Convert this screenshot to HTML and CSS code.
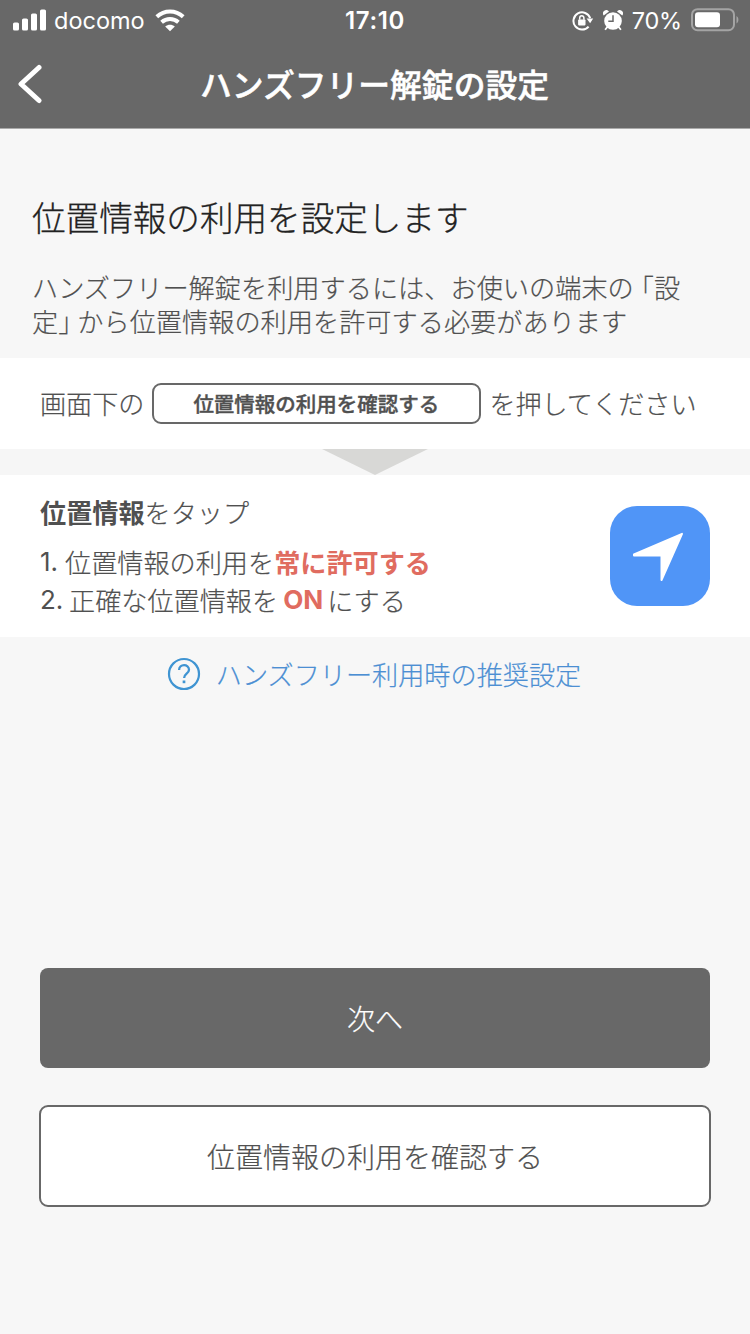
FILE: index.html
```html
<!DOCTYPE html>
<html lang="ja">
<head>
<meta charset="utf-8">
<title>ハンズフリー解錠の設定</title>
<link rel="stylesheet" href="styles.css">
</head>
<body>
<div class="screen">
  <header class="header">
    <div class="status">
      <div class="status-left">
        <svg class="signal" width="34" height="22" viewBox="0 0 34 22" fill="#fff"><rect x="0" y="13.5" width="6" height="8" rx="1.6"/><rect x="9" y="9.5" width="6" height="12" rx="1.6"/><rect x="18" y="4.5" width="6" height="17" rx="1.6"/><rect x="27" y="0.5" width="6" height="21" rx="1.6"/></svg>
        <span class="carrier">docomo</span>
        <svg class="wifi" width="30" height="23" viewBox="0 0 30 23"><g fill="none" stroke="#fff" stroke-width="4"><path d="M1.8 7.8C9.4 .7 20.6 .7 28.2 7.8"/><path d="M6.6 13.2C11.5 8.9 18.5 8.9 23.4 13.2"/></g><path d="M10.2 17.4c2.8-2.3 6.8-2.3 9.6 0L15 22.2z" fill="#fff"/></svg>
      </div>
      <span class="clock">17:10</span>
      <div class="status-right">
        <svg class="lock" width="22" height="20" viewBox="0 0 22 20"><path d="M18.2 7.2A8.6 8.6 0 1 0 16.6 15.6" fill="none" stroke="#fff" stroke-width="2"/><path d="M14.6 7.4h6.6l-3.1 4.8z" fill="#fff"/><rect x="6.1" y="8.4" width="7.4" height="6" rx=".8" fill="#fff"/><path d="M7.7 8.8V7a2.1 2.3 0 0 1 4.2 0v1.8" fill="none" stroke="#fff" stroke-width="1.5"/></svg>
        <svg class="alarm" width="20" height="21" viewBox="0 0 20 21"><g fill="#fff"><circle cx="10" cy="11" r="8.8"/><path d="M.7 5.5A3.2 3.2 0 0 1 6 1.5zM19.3 5.5A3.2 3.2 0 0 0 14 1.5z"/></g><path d="M4.3 17l-2.2 2.7M15.7 17l2.2 2.7" stroke="#fff" stroke-width="1.8"/><path d="M10 5.2v6H5.3" fill="none" stroke="#686868" stroke-width="1.5"/></svg>
        <span class="percent">70%</span>
        <svg class="battery" width="48" height="24" viewBox="0 0 48 24"><rect x="1" y="1.2" width="42" height="21" rx="5.5" fill="none" stroke="#a4a4a4" stroke-width="2"/><rect x="4" y="4.2" width="25" height="15" rx="3" fill="#fff"/><path d="M45.500 8c2.500 1.300 2.500 6.200 0 7.500z" fill="#a4a4a4"/></svg>
      </div>
    </div>
    <div class="nav">
      <svg class="back" width="24" height="40" viewBox="0 0 24 40"><path d="M21 3.500L3 20l18 16.500" fill="none" stroke="#fff" stroke-width="5" stroke-linecap="round" stroke-linejoin="round"/></svg>
      <h1 class="title">ハンズフリー解錠の設定</h1>
      <span></span>
    </div>
  </header>
  <section class="intro">
    <h2 class="heading">位置情報の利用を設定します</h2>
    <p class="lead">ハンズフリー解錠を利用するには、お使いの端末の<span class="open">「</span>設<br>定<span class="close">」</span>から位置情報の利用を許可する必要があります</p>
  </section>
  <section class="press">
    <span>画面下の</span><span class="pill">位置情報の利用を確認する</span><span>を押してください</span>
  </section>
  <div class="divider"><svg class="arrow" width="106" height="26" viewBox="0 0 106 26"><path d="M0 0h106L53 26z" fill="#d8d8d6"/></svg></div>
  <section class="steps">
    <div class="step-text">
      <p class="step-title"><b>位置情報</b>をタップ</p>
      <p class="step"><span class="num one">1.</span>位置情報の利用を<b class="red">常に許可する</b></p>
      <p class="step"><span class="num two">2.</span>正確な位置情報を<b class="red on">ON</b>にする</p>
    </div>
    <svg class="location" width="100" height="100" viewBox="0 0 100 100"><rect width="100" height="100" rx="27" fill="#5095f7"/><path d="M24 48.500L72 27.800L51.500 74V49.500H24z" fill="#fff" stroke="#fff" stroke-width="2" stroke-linejoin="round"/></svg>
  </section>
  <div class="help">
    <svg width="34" height="34" viewBox="0 0 34 34" fill="none" stroke="#3f94d2"><circle cx="17" cy="17" r="15" stroke-width="2.200"/><path d="M12.100 13c0-6.400 9.900-6.400 9.900-.3 0 4.100-4.900 4-4.900 8.300" stroke-width="2.300"/><path d="M17 23.500v2.700" stroke-width="2.700"/></svg>
    <span>ハンズフリー利用時の推奨設定</span>
  </div>
  <footer class="actions">
    <button class="btn primary">次へ</button>
    <button class="btn secondary">位置情報の利用を確認する</button>
  </footer>
</div>
</body>
</html>
```

FILE: styles.css
```css
* { box-sizing: border-box; }
body { margin: 0; font-family: "Noto Sans CJK JP", sans-serif; font-weight: 300; color: #505050; }
h1, h2, p { margin: 0; }
svg { display: block; flex: none; }
.screen { width: 750px; height: 1334px; background: #f7f7f7; display: flex; flex-direction: column; white-space: nowrap; -webkit-text-stroke-width: .2px; }
.header { height: 129px; background: #686868; border-bottom: 1px solid #aaa; color: #fff; flex: none; }
.status { height: 40px; display: grid; grid-template-columns: 1fr auto 1fr; align-items: center; padding: 0 11px 2px 13px; font-family: Inter, sans-serif; font-size: 24px; line-height: 38px; -webkit-text-stroke-width: 0; }
.status-left, .status-right { display: flex; align-items: center; }
.status-right { justify-content: flex-end; }
.carrier { margin-left: 7px; padding-top: 2px; width: 91px; font-size: 23.5px; font-weight: 400; letter-spacing: 0; }
.wifi { margin-left: 10px; }
.clock { padding-top: 2px; margin-right: 2px; font-weight: 600; letter-spacing: .6px; }
.lock, .alarm { margin-top: 1px; }
.alarm { margin-left: 9px; }
.percent { padding-top: 2px; margin: 0 9px 0 9px; font-size: 23.5px; font-weight: 400; letter-spacing: -.2px; }
.nav { height: 88px; display: grid; grid-template-columns: 1fr auto 1fr; align-items: center; padding: 0 18px; }
.title { padding-bottom: 3px; margin-right: 1px; font-size: 31.8px; line-height: 44px; font-weight: 500; -webkit-text-stroke-width: .5px; }
.intro { height: 229px; padding: 64px 32px 0; flex: none; }
.heading { font-size: 33.6px; line-height: 48px; font-weight: 300; color: #222; -webkit-text-stroke-width: .3px; }
.lead { margin-top: 29px; font-size: 26.2px; line-height: 34px; }
.open, .close { font-feature-settings: "halt"; }
.open { margin-left: 7px; }
.close { margin-right: 6px; }
.press { height: 91px; flex: none; background: #fff; padding: 0 40px 2px; display: flex; align-items: center; gap: 8px; font-size: 26.1px; }
.pill { width: 329px; height: 41px; margin-top: 2px; padding-right: 1px; border: 2px solid #686868; border-radius: 9px; text-align: center; font-size: 20.5px; line-height: 36px; font-weight: 500; -webkit-text-stroke-width: .4px; }
.divider { height: 26px; flex: none; display: flex; justify-content: center; background: #f6f6f6; }
.steps { height: 162px; flex: none; background: #fff; padding: 0 40px; display: flex; align-items: center; justify-content: space-between; font-size: 26.15px; line-height: 38px; }
.step-title { margin-bottom: 12px; }
.step { display: flex; }
b { font-weight: 700; -webkit-text-stroke-width: 0; }
.num { font-family: Inter, sans-serif; font-weight: 400; font-size: 26px; -webkit-text-stroke-width: 0; }
.one { width: 25px; }
.two { width: 29px; }
.red { color: #e06c60; }
.on { font-family: Inter, sans-serif; margin: 0 4px 0 5px; }
.help { height: 74px; flex: none; display: flex; align-items: center; justify-content: center; gap: 15px; padding-right: 2px; font-size: 26.15px; color: #4c8fd3; }
.help span { padding-bottom: 1px; }
.actions { margin-top: auto; padding: 0 39px 127px; display: flex; flex-direction: column; gap: 37px; }
.btn { font: 300 28px "Noto Sans CJK JP", sans-serif; border-radius: 9px; padding: 0 0 1px; -webkit-text-stroke-width: .2px; }
.primary { height: 100px; margin: 0 1px; border: 0; border-radius: 8px; background: #686868; color: #fff; }
.secondary { height: 102px; background: #fff; border: 2px solid #686868; color: #505050; }
```
